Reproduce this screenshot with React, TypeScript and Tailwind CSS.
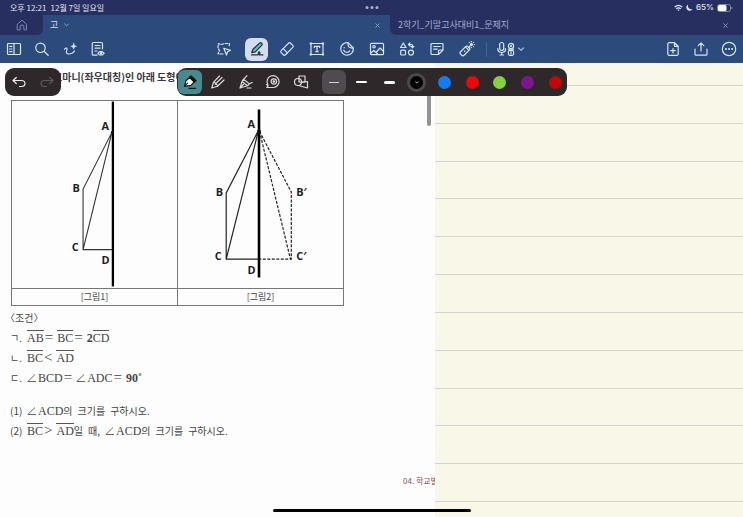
import type { ReactNode } from "react";

const kr = "font-['Noto_Sans_CJK_KR',sans-serif]";

function Icon({ size = "size-4", children }: { size?: string; children: ReactNode }) {
  return (
    <svg
      viewBox="0 0 16 16"
      className={size}
      fill="none"
      stroke="currentColor"
      strokeWidth="1.2"
      strokeLinecap="round"
      strokeLinejoin="round"
      aria-hidden="true"
    >
      {children}
    </svg>
  );
}

function ToolButton({ label, width = "w-[30px]", children }: { label: string; width?: string; children: ReactNode }) {
  return (
    <button type="button" aria-label={label} className={`flex h-7 shrink-0 items-center justify-center ${width}`}>
      {children}
    </button>
  );
}

function StatusBar() {
  return (
    <div className="relative flex h-[15px] items-center bg-[#262f60] pl-2.5 pr-[10px] text-[8px] leading-[15px] text-[#e3e6f3]">
      <span>오후 12:21</span>
      <span className="ml-1">12월 7일 일요일</span>
      <div className="absolute left-1/2 flex -translate-x-1/2 gap-[2px]">
        <i className="size-[3px] rounded-full bg-[#a9afd0]" />
        <i className="size-[3px] rounded-full bg-[#a9afd0]" />
        <i className="size-[3px] rounded-full bg-[#a9afd0]" />
      </div>
      <div className="ml-auto flex items-center gap-[3px] font-['Inter',sans-serif] font-medium">
        <svg viewBox="0 0 10 8" className="h-2 w-[9px]" fill="none" stroke="currentColor" strokeWidth="1.4">
          <path d="M.7 3Q5-.9 9.300 3M2.400 4.900Q5 2.700 7.600 4.900" />
          <path d="M3.700 6 5 7.400 6.300 6Q5 5.100 3.700 6Z" fill="currentColor" stroke="none" />
        </svg>
        <svg viewBox="0 0 8 8" className="size-[7px]" fill="currentColor">
          <path d="M2.400.5A4 4 0 0 0 7.500 5.700 3.800 3.800 0 1 1 2.400.5Z" />
        </svg>
        <span>65%</span>
        <svg viewBox="0 0 16 8" className="h-2 w-4">
          <rect x=".5" y=".5" width="13" height="7" rx="2" fill="none" stroke="#7f86ad" />
          <rect x="1" y="1" width="8.500" height="6" rx="1.500" fill="#fff" />
          <path d="M14.800 3v2" stroke="#7f86ad" />
        </svg>
      </div>
    </div>
  );
}

function CloseMark() {
  return (
    <svg viewBox="0 0 6 6" className="size-[5px]" stroke="#96a3c8" strokeWidth="1" aria-hidden="true">
      <path d="M.5.5l5 5M5.500.5l-5 5" />
    </svg>
  );
}

function Tabs() {
  return (
    <nav className="flex h-5 bg-[#2c4a7c] text-[9px] leading-5">
      <div className="bg-[#2c4a7c]">
        <button type="button" aria-label="홈" className="flex h-5 w-[43px] items-center justify-center rounded-br-md bg-[#262f60] text-[#8490bb]">
          <Icon size="size-3">
            <path d="M2 7 8 1.500 14 7v7.500h-3.500V10.500a2.500 2.500 0 0 0-5 0v4H2Z" />
          </Icon>
        </button>
      </div>
      <div className="flex min-w-0 flex-[347] items-center pl-[7px] pr-[10px] text-[#d3dcee]">
        <button type="button" className="flex items-center gap-1.5">
          고
          <svg viewBox="0 0 6 4" className="h-1 w-[5px]" fill="none" stroke="#a9b8d8">
            <path d="M.5.5 3 3 5.500.5" />
          </svg>
        </button>
        <button type="button" aria-label="탭 닫기" className="ml-auto">
          <CloseMark />
        </button>
      </div>
      <div className="flex min-w-0 flex-[347] items-center rounded-bl-md bg-[#262f60] pl-2 pr-[15px] text-[#a4acd0]">
        <button type="button" className="truncate">2학기_기말고사대비1_문제지</button>
        <button type="button" aria-label="탭 닫기" className="ml-auto">
          <CloseMark />
        </button>
      </div>
    </nav>
  );
}

function Toolbar() {
  return (
    <div className="flex h-7 items-center bg-[#2c4a7c] text-[#d2e6f6]">
      <ToolButton label="사이드바" width="w-7">
        <Icon>
          <rect x="1.500" y="2.500" width="13" height="11" rx="1" />
          <path d="M8 2.500v11M3.500 5.300h2.500M3.500 8h2.500M3.500 10.700h2.500" />
        </Icon>
      </ToolButton>
      <ToolButton label="검색" width="w-7">
        <Icon>
          <circle cx="6.500" cy="6.800" r="4.700" />
          <path d="m10 10.300 4.200 4" />
        </Icon>
      </ToolButton>
      <ToolButton label="AI 펜" width="w-7">
        <Icon>
          <path d="M2.500 8.200C4.500 6 5.500 7.200 4.800 9c-1 2.800-.3 4 2 4 2.500 0 4.300-1 5.700-3" />
          <path d="M11.700 2.300c.4 2 1 2.600 3 3-2 .4-2.600 1-3 3-.4-2-1-2.600-3-3 2-.4 2.600-1 3-3Z" fill="currentColor" strokeWidth=".5" />
        </Icon>
      </ToolButton>
      <ToolButton label="문서 보기" width="w-7">
        <Icon>
          <path d="M7 14.200H3.500a1.300 1.300 0 0 1-1.300-1.300V2.800a1.300 1.300 0 0 1 1.300-1.300h7.700a1.300 1.300 0 0 1 1.300 1.300v5M5 4.500h5M5 7.200h5M5 10h2" />
          <path d="M7.800 12.300q3-3.800 6.400 0-3.400 3.600-6.400 0Z" />
          <circle cx="11" cy="12.200" r=".7" fill="currentColor" />
        </Icon>
      </ToolButton>

      <div className="ml-[97px] flex items-center">
        <ToolButton label="선택">
          <Icon>
            <path d="M7 13H5.300L2 12.700 3.500 9.500 2 7l.3-4.500L5 3.500l4-1 4.500 0-.5 3.500" strokeDasharray="2.400 1.500" />
            <path d="m7.800 7.300 6.700 2-3 1.500-1 3.200Z" />
          </Icon>
        </ToolButton>
        <button type="button" aria-label="펜" aria-pressed="true" className="ml-1.5 mr-1 flex h-[23px] w-[23px] items-center justify-center rounded-md bg-[#d3dcf0] text-[#263035]">
          <Icon>
            <path d="M2.700 11.700 4 8.300l6.500-6.200q1-.8 2.100.1 1 1.200.1 2.200L6.300 10.800Z" fill="#52c4be" />
            <path d="M2.500 13.800h6c2.600-.2 3-3 1.700-3-1.300.1-1.300 3 .4 3H14" />
          </Icon>
        </button>
        <ToolButton label="지우개">
          <Icon>
            <rect x="5" y="1.300" width="6" height="13.400" rx="1.500" transform="rotate(45 8 8)" />
            <path d="m4.200 7.600 4.200 4.200" />
          </Icon>
        </ToolButton>
        <ToolButton label="텍스트">
          <Icon>
            <rect x="2" y="2.500" width="12" height="11" />
            <path d="M5.300 6.500V5.300h5.400v1.200M8 5.300v5.400M6.800 10.700h2.400" />
            <path d="M1.300 1.800h1.400v1.400H1.300ZM13.300 1.800h1.400v1.400h-1.400ZM1.300 12.800h1.400v1.400H1.300ZM13.300 12.800h1.400v1.400h-1.400Z" fill="currentColor" strokeWidth=".6" />
          </Icon>
        </ToolButton>
        <ToolButton label="스티커">
          <Icon>
            <path d="M9 1.700A6.300 6.300 0 1 0 14.300 7Z" />
            <path d="M9 1.700C8.500 5.500 10 7.300 14.300 7M4.700 9.300c1.200 2.500 4.500 2.600 6 .5M5.200 6.500v.3" />
          </Icon>
        </ToolButton>
        <ToolButton label="이미지">
          <Icon>
            <rect x="1.500" y="2.300" width="13" height="11.400" rx="1" />
            <circle cx="5" cy="5.700" r="1.200" />
            <path d="m1.800 12 3-2.500 2.200 2 4-4.500 3.400 3.300M7 11.500l2 2" />
          </Icon>
        </ToolButton>
        <ToolButton label="도형">
          <Icon>
            <path d="M4.300 2 7 6.500H1.500ZM9.500 3.500h3q1 0 1 1v2M11 2 9.500 3.500 11 5M12.200 5.300l1.300 1.500 1.300-1.500" />
            <rect x="1.700" y="9.200" width="4.800" height="4.800" rx="1" />
            <circle cx="12" cy="11.600" r="2.500" />
          </Icon>
        </ToolButton>
        <ToolButton label="메모">
          <Icon>
            <path d="M14 9V3.500a1 1 0 0 0-1-1H3a1 1 0 0 0-1 1v9a1 1 0 0 0 1 1h6.500ZM14 9h-3.500a1 1 0 0 0-1 1v3.500M4.700 5.500h6.500M4.700 8.200h3.500" />
          </Icon>
        </ToolButton>
        <ToolButton label="레이저 포인터">
          <Icon>
            <rect x="3.300" y="4.600" width="5" height="10.600" rx="1.700" transform="rotate(45 5.800 10)" />
            <path d="m6.700 6.200 3 3M5.500 10.300l.3-.3M9.500 6.500l1.500-1.500" />
            <circle cx="12.400" cy="3.500" r="1" fill="currentColor" />
            <path d="M12.400.5v.3M15.200 3.500h.2M14.500 1.400l.1-.1M10.300 1.400l-.1-.1M14.500 5.600l.1.1M12.400 6.300v.2" />
          </Icon>
        </ToolButton>
        <span className="mx-1 h-[15px] w-px bg-[#42659a]" />
        <button type="button" aria-label="녹음" className="flex items-center pl-1.5">
          <svg viewBox="0 0 28 16" className="h-4 w-7" fill="none" stroke="currentColor" strokeWidth="1.200" strokeLinecap="round" strokeLinejoin="round">
            <rect x="2.700" y="1.500" width="4" height="8" rx="2" />
            <path d="M.8 7.500c0 5.300 7.800 5.300 7.800 0M4.700 11.500V14M3 14h3.400" />
            <circle cx="14" cy="5" r="2.600" />
            <circle cx="14" cy="5" r=".5" fill="currentColor" />
            <rect x="11.400" y="9.300" width="5.200" height="5" rx="1.500" />
            <path d="M14 10.500v2.400M11.500 8.200h5" />
            <path d="m21.500 7 2.500 2.300L26.500 7" stroke="#9db5d6" />
          </svg>
        </button>
      </div>

      <div className="ml-auto flex">
        <ToolButton label="페이지 추가" width="w-7">
          <Icon>
            <path d="M9.500 1.700H4a1.200 1.200 0 0 0-1.200 1.200v10.200A1.200 1.200 0 0 0 4 14.300h8a1.200 1.200 0 0 0 1.200-1.200V5.300ZM9.500 1.700v3.600h3.700M8 7.500v4.400M5.800 9.700h4.400" />
          </Icon>
        </ToolButton>
        <ToolButton label="공유" width="w-7">
          <Icon>
            <path d="M8 10V2M5.200 4.600 8 1.800l2.800 2.800M2 8v5.200a1 1 0 0 0 1 1h10a1 1 0 0 0 1-1V8" />
          </Icon>
        </ToolButton>
        <ToolButton label="더 보기" width="w-7">
          <Icon>
            <circle cx="8" cy="8" r="6.700" />
            <path d="M4.900 8h.1M8 8h.1M11 8h.1" strokeWidth="2" />
          </Icon>
        </ToolButton>
      </div>
    </div>
  );
}

const swatches = [
  { name: "파랑", color: "bg-[#147cf2]" },
  { name: "빨강", color: "bg-[#ea0808]" },
  { name: "연두", color: "bg-[#83d23d]" },
  { name: "보라", color: "bg-[#7e1690]" },
  { name: "진한 빨강", color: "bg-[#c40606]" },
];

function PenPalette() {
  return (
    <>
      <div className="absolute left-[5px] top-[5px] flex h-7 w-14 items-center justify-around rounded-[9px] bg-[#2e282a] text-[#eeeaec]">
        <button type="button" aria-label="실행 취소">
          <Icon>
            <path d="M5.300 3.500 2 6.500l3.300 3M2 6.500h8.500c4.600 0 4.600 6 0 6H8.500" />
          </Icon>
        </button>
        <button type="button" aria-label="다시 실행" className="text-[#5e585a]">
          <Icon>
            <path d="m10.700 3.500 3.300 3-3.300 3M14 6.500H5.500c-4.600 0-4.600 6 0 6h2" />
          </Icon>
        </button>
      </div>

      <div className="absolute left-[177px] top-[5px] flex h-7 w-[390px] items-center gap-[9px] rounded-[9px] bg-[#2e282a] pl-px text-[#dedadb]">
        <div className="flex w-[135px] items-center justify-between">
          <button type="button" aria-label="만년필" aria-pressed="true" className="flex size-6 items-center justify-center rounded-md bg-[#478b8e]">
            <Icon>
              <path d="m2.500 12.300 1.400-5.500 4-3.600 4.500 4.700-3.600 3.500Z" fill="#fff" stroke="#101617" />
              <path d="m7.500 3.300 1.700-1.500 4.800 4.900-1.600 1.600Z" fill="#101617" stroke="#101617" />
              <path d="m2.600 12.200 3-3M7 14.300h6.500" stroke="#101617" />
            </Icon>
          </button>
          <ToolButton label="볼펜" width="w-6">
            <Icon>
              <path d="m1.800 14 1.600-5.700L9.500 2M1.800 14l5.700-1.700L14 6M3.400 8.300c1.500-.4 2 .5 1.900 1.900 1.400-.1 2.400.5 2.200 2.100M5.300 10.200 12 3.500" />
            </Icon>
          </ToolButton>
          <ToolButton label="붓펜" width="w-6">
            <Icon>
              <path d="M2 14 4 7.500l5.500 4.200ZM4 7.500l1.500-2.300 6 4.700-2 1.800M5.800 5.200 9 1.700M11.500 9.800l2.700-1.300M2 14l3.500-3.700M9 14h4" />
            </Icon>
          </ToolButton>
          <ToolButton label="테이프" width="w-6">
            <Icon>
              <path d="M2.800 10.500A6 6 0 1 1 8.800 13.500H1.800l1.300-1.700-1.500-1.300Z" />
              <circle cx="8.800" cy="7.500" r="2.700" />
              <circle cx="8.800" cy="7.500" r=".7" fill="currentColor" />
            </Icon>
          </ToolButton>
          <ToolButton label="도형 인식" width="w-6">
            <Icon>
              <circle cx="5" cy="8" r="3.500" />
              <rect x="6" y="2" width="6" height="6" />
              <path d="m8 8.500 6.500-1V14L5.500 11.500" />
            </Icon>
          </ToolButton>
        </div>
        <div className="flex flex-1 items-center justify-between">
          <button type="button" aria-label="가는 선" aria-pressed="true" className="flex size-6 items-center justify-center rounded-md bg-[#504b4e]">
            <i className="h-px w-2.5 bg-[#d6d3d4]" />
          </button>
          <button type="button" aria-label="중간 선" className="flex size-6 items-center justify-center">
            <i className="h-[2px] w-[11px] rounded-full bg-white" />
          </button>
          <button type="button" aria-label="굵은 선" className="flex size-6 items-center justify-center">
            <i className="h-[3px] w-[11px] rounded-full bg-white" />
          </button>
          <button type="button" aria-label="검정" aria-pressed="true" className="flex size-6 items-center justify-center">
            <span className="flex size-[19px] items-center justify-center rounded-full border-[3px] border-[#4c4749] bg-black">
              <svg viewBox="0 0 6 4" className="h-[3px] w-1" fill="none" stroke="#fff">
                <path d="M.5.5 3 3 5.500.5" />
              </svg>
            </span>
          </button>
          {swatches.map((s) => (
            <button key={s.name} type="button" aria-label={s.name} className="flex size-6 items-center justify-center">
              <span className={`size-[13px] rounded-full ${s.color}`} />
            </button>
          ))}
        </div>
      </div>
    </>
  );
}

const label = "fill-[#1d1d1f] stroke-none font-['Open_Sans',sans-serif] text-[11px] font-bold";

function FigureOne() {
  return (
    <svg viewBox="12 101 166 187" className="block h-[187px] w-full" fill="none" stroke="#333" aria-label="그림1">
      <path d="M113.500 101v186" stroke="#000" strokeWidth="2.300" />
      <path d="M112.500 132 83.500 189v61H113M112.500 132 83.500 250" strokeWidth="1.100" />
      <circle cx="113" cy="132" r="1.500" fill="#111" stroke="none" />
      <text x="102" y="130" className={label}>A</text>
      <text x="73" y="192" className={label}>B</text>
      <text x="72" y="251" className={label}>C</text>
      <text x="102" y="264" className={label}>D</text>
    </svg>
  );
}

function FigureTwo() {
  return (
    <svg viewBox="178 101 166 187" className="block h-[187px] w-full" fill="none" stroke="#222" aria-label="그림2">
      <path d="M259.500 109v169" stroke="#000" strokeWidth="2.600" />
      <path d="M259 130 226.500 193v66.500H259M259 130 226.500 259.500" strokeWidth="1.200" />
      <path d="M260 131 292 192v67.500h-32M260 131l31 128" strokeWidth="1.200" strokeDasharray="3 1.500" />
      <circle cx="259.500" cy="131" r="2" fill="#111" stroke="none" />
      <text x="248" y="128" className={label}>A</text>
      <text x="216" y="196" className={label}>B</text>
      <text x="215" y="260" className={label}>C</text>
      <text x="248" y="275" className={label}>D</text>
      <text x="297" y="196" className={label}>B′</text>
      <text x="297" y="260" className={label}>C′</text>
    </svg>
  );
}

function Seg({ children }: { children: string }) {
  return <span className="border-t border-[#555] pt-px font-['Liberation_Serif',serif] text-[12px] leading-3">{children}</span>;
}

function M({ children }: { children: string }) {
  return <span className="font-['Liberation_Serif',serif] text-[12px] leading-3">{children}</span>;
}

function Op({ children }: { children: string }) {
  return <span className="ml-px mr-1 font-['Liberation_Serif',serif] text-[15px] leading-3">{children}</span>;
}

function Angle() {
  return (
    <svg viewBox="0 0 9 8" className="mr-[2px] inline-block h-2 w-[9px]" fill="none" stroke="#555" strokeWidth=".9" aria-label="각">
      <path d="M8 .5.8 7.500H9" />
    </svg>
  );
}

function Ask() {
  return (
    <span className="flex gap-[5px]">
      <span>의</span>
      <span>크기를</span>
      <span>구하시오.</span>
    </span>
  );
}

function Row({ mark, children }: { mark: string; children: ReactNode }) {
  return (
    <li className="flex h-5 items-baseline">
      <span className="w-[17px] shrink-0">{mark}</span>
      {children}
    </li>
  );
}

function Worksheet() {
  return (
    <article className="relative overflow-hidden whitespace-nowrap bg-[#fefdfe] text-[10px] leading-5 text-[#444]">
      <h1 className="h-[37px] pl-[53px] pt-1 font-bold text-[#39373a]">꼬마니(좌우대칭)인 아래 도형이</h1>
      <table className="ml-[11px] w-[333px] table-fixed border-collapse border border-[#777] text-center text-[9px] leading-4 text-[#444]">
        <tbody>
          <tr>
            <td className="border border-[#777] p-0"><FigureOne /></td>
            <td className="border border-[#777] p-0"><FigureTwo /></td>
          </tr>
          <tr>
            <td className="border border-[#777] p-0">[그림1]</td>
            <td className="border border-[#777] p-0">[그림2]</td>
          </tr>
        </tbody>
      </table>

      <section className="pl-[10px] pt-[2px]">
        <h2 className="[font-feature-settings:'halt']">〈조건〉</h2>
        <ul className="h-[59px]">
          <Row mark="ㄱ.">
            <Seg>AB</Seg><Op>=</Op><Seg>BC</Seg><Op>=</Op><b><M>2</M></b><Seg>CD</Seg>
          </Row>
          <Row mark="ㄴ.">
            <Seg>BC</Seg><Op>&lt;</Op><Seg>AD</Seg>
          </Row>
          <Row mark="ㄷ.">
            <Angle /><M>BCD</M><Op>=</Op><Angle /><M>ADC</M><Op>=</Op><b><M>90˚</M></b>
          </Row>
        </ul>
        <ol className="mt-3.5">
          <Row mark="(1)">
            <Angle /><M>ACD</M><Ask />
          </Row>
          <Row mark="(2)">
            <Seg>BC</Seg><Op>&gt;</Op><Seg>AD</Seg>
            <span className="mr-[5px] flex gap-[5px]">
              <span>일</span>
              <span>때,</span>
            </span>
            <Angle /><M>ACD</M><Ask />
          </Row>
        </ol>
      </section>
      <footer className="mt-[30px] flex justify-end text-[8px] text-[#875560]">
        <span className="w-8">04. 학교별</span>
      </footer>
      <i className="absolute right-1 top-6 h-[39px] w-1 rounded-full bg-[#959297]" />
    </article>
  );
}

const ruledRows = Array.from({ length: 11 }, (_, i) => i);

function Notebook() {
  return (
    <section aria-label="노트" className="flex flex-col bg-[#f9f7e8]">
      <div className="h-[23px] border-b border-[#d5d4cf]" />
      {ruledRows.map((i) => (
        <div key={i} className="flex-1 border-b border-[#d5d4cf]" />
      ))}
      <div className="h-[15px]" />
    </section>
  );
}

export default function App() {
  return (
    <div className={`flex h-screen flex-col overflow-hidden bg-[#fefdfe] ${kr}`}>
      <header>
        <StatusBar />
        <Tabs />
        <Toolbar />
      </header>
      <main className="relative grid min-h-0 flex-1 grid-cols-[435fr_308fr]">
        <Worksheet />
        <Notebook />
        <PenPalette />
        <i className="absolute bottom-[5px] left-1/2 h-[3px] w-[198px] -translate-x-1/2 rounded-full bg-black" />
      </main>
    </div>
  );
}
